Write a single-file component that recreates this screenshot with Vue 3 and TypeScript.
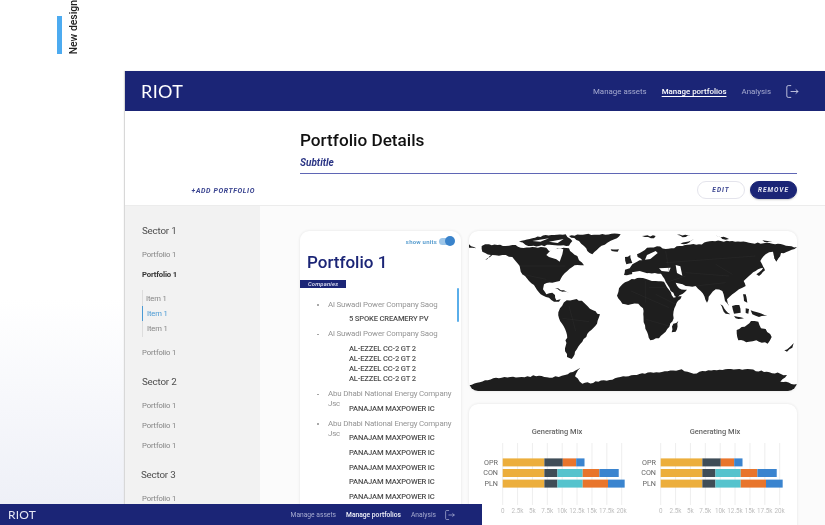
<script setup lang="ts">
interface Company { name: string; wrap?: boolean; tight?: boolean; plants: string[] }
const companies: Company[] = [
  { name: 'Al Suwadi Power Company Saog', plants: ['5 SPOKE CREAMERY PV'] },
  { name: 'Al Suwadi Power Company Saog', tight: true, plants: ['AL-EZZEL CC-2 GT 2', 'AL-EZZEL CC-2 GT 2', 'AL-EZZEL CC-2 GT 2', 'AL-EZZEL CC-2 GT 2'] },
  { name: 'Abu Dhabi National Energy Company Jsc', wrap: true, plants: ['PANAJAM MAXPOWER IC'] },
  { name: 'Abu Dhabi National Energy Company Jsc', wrap: true, plants: ['PANAJAM MAXPOWER IC', 'PANAJAM MAXPOWER IC', 'PANAJAM MAXPOWER IC', 'PANAJAM MAXPOWER IC', 'PANAJAM MAXPOWER IC'] },
]
const ticks = ['0', '2.5k', '5k', '7.5k', '10k', '12.5k', '15k', '17.5k', '20k']
const colors = ['#ecae3c', '#3f4d57', '#e8752c', '#3a84cf']
const colorsLong = ['#ecae3c', '#3f4d57', '#55c3cd', '#e8752c', '#3a84cf']
const rows = [
  { label: 'OPR', y: 54.4, colors, values: [7, 3.1, 2.25, 1.4] },
  { label: 'CON', y: 65, colors: colorsLong, values: [7, 2.2, 4.25, 2.8, 3.25] },
  { label: 'PLN', y: 75.6, colors: colorsLong, values: [7, 2.2, 4.25, 4.25, 2.8] },
]
const X0 = 33.7
const SCALE = 5.95
function segments(values: number[], palette: string[]) {
  let acc = 0
  return values.map((v, i) => {
    const seg = { x: X0 + acc * SCALE, w: v * SCALE, fill: palette[i] }
    acc += v
    return seg
  })
}
let seed = 7
function rand() {
  seed = (seed * 16807) % 2147483647
  return seed / 2147483647 - 0.5
}
// Roughens a polygon's edges so the coastlines read as a map rather than as straight cuts.
function jag(d: string, amp = 5): string {
  const nums = (d.match(/-?[\d.]+/g) ?? []).map(Number)
  const pts: [number, number][] = []
  for (let i = 0; i + 1 < nums.length; i += 2) pts.push([nums[i], nums[i + 1]])
  const out: string[] = []
  pts.forEach((p, i) => {
    const q = pts[(i + 1) % pts.length]
    const dx = q[0] - p[0]
    const dy = q[1] - p[1]
    const len = Math.hypot(dx, dy)
    const n = Math.floor(len / 8)
    out.push(`${p[0]} ${p[1]}`)
    for (let k = 1; k < n; k++) {
      const off = rand() * amp
      const x = p[0] + (dx * k) / n - (dy / len) * off
      const y = p[1] + (dy * k) / n + (dx / len) * off
      out.push(`${x.toFixed(1)} ${y.toFixed(1)}`)
    }
  })
  return `M${out.join('L')}Z`
}
const rawLand = [
  // North America
  'M38 45L60 40 85 42 110 45 140 42 155 50 190 48 232 50 240 60 283 50 300 52 310 65 325 75 330 88 345 103 325 102 310 108 295 120 280 135 272 150 262 152 250 155 225 160 222 175 232 190 250 185 258 192 262 208 275 205 270 212 255 212 240 200 215 190 200 170 180 150 160 130 152 105 130 78 100 72 70 72 48 88 66 72 40 62Z',
  // Arctic archipelago
  'M150 32L190 22 230 12 290 10 310 30 300 44 250 42 210 45 170 42Z',
  // Greenland
  'M300 15L350 10 400 9 455 10 436 25 415 35 390 50 370 70 355 60 345 45 330 30Z',
  // South America
  'M273 232L293 208 323 204 345 215 356 226 372 238 393 250 384 278 360 302 340 332 318 362 308 384 294 378 288 352 294 312 270 262 268 244Z',
  // Africa
  'M468 154L488 144 513 140 538 146 560 150 585 152 600 176 614 200 638 196 616 232 614 262 590 302 570 322 544 328 534 302 524 274 522 232 508 218 486 220 460 218 444 194 450 172Z',
  // Eurasia
  'M465 132L468 116 482 112 490 100 504 92 520 88 506 78 504 70 534 50 564 46 590 54 640 45 690 40 730 30 790 30 840 35 910 38 984 48 960 60 936 66 922 92 912 62 890 70 874 90 884 110 860 120 840 135 824 150 830 165 810 175 790 190 774 205 780 225 768 210 760 180 740 175 725 190 714 215 695 180 680 165 650 165 620 155 630 172 654 176 625 200 605 180 590 152 576 128 530 128 500 128Z',
  // Australia
  'M803 297L834 282 846 270 868 272 876 292 890 294 908 318 896 338 862 328 840 332 808 328Z',
  // Madagascar
  'M613 278L628 270 620 302 608 304Z',
  // New Zealand
  'M946 358L960 350 974 336 970 350 954 362Z',
  // Antarctica
  'M-8 490L-8 464 48 448 98 440 158 438 210 434 250 440 288 432 334 410 318 436 340 458 388 452 438 442 528 428 638 415 674 428 718 418 828 415 934 428 954 432 934 452 992 462 992 490Z',
  // UK, Ireland, Iceland, Cuba, Chukotka
  'M468 78L484 72 490 96 472 100Z',
  'M425 55L450 55 446 62 428 60Z',
  'M258 172L285 178 300 185 280 182Z',
  'M0 40L22 52 0 50Z',
  // Indonesia and neighbours
  'M789 225L811 222 815 245 795 248Z',
  'M754 220L784 250 770 248Z',
  'M795 255L825 262 800 262Z',
  'M822 190L830 190 835 215 825 210Z',
  'M845 238L870 245 895 255 870 258 850 250Z',
  'M830 232L840 234 838 248 830 246Z',
  // Japan, Sakhalin
  'M862 130L884 108 888 118 870 135Z',
  'M915 80L930 70 922 90Z',
  // Arctic islands
  'M519 15L560 15 555 22Z',
  'M615 12L665 12 650 18Z',
  'M739 12L780 24 760 24Z',
  'M634 38L675 25 645 40Z',
  'M880 28L910 30 895 34Z',
]
const land = rawLand.map((d) => jag(d))
const holes = [
  'M232 72L245 58 270 52 283 55 280 70 272 92 262 85 240 78Z',
  'M489 124L512 120 532 126 552 136 572 138 580 146 560 146 530 142 505 138 490 132Z',
  'M570 112L605 110 600 122 578 120Z',
  'M620 102L634 106 640 134 624 126Z',
  'M534 72L560 60 566 66 544 84 528 86Z',
  'M190 30L240 22 214 32ZM240 32L284 24 266 36Z',
]
const borders = 'M152 105L290 105M160 130L232 145M530 150L530 215M486 180L600 230M530 265L600 285M300 225L320 300M280 262L360 272M650 125L780 135M590 95L860 75M680 165L770 155M590 155L650 135M590 60L600 120M740 100L790 130M560 190L620 220M540 170L590 170'
</script>

<template>
  <div class="canvas">
    <div class="note">
      <span class="note-bar"></span>
      <span class="note-text">New design</span>
    </div>

    <section class="frame">
      <header class="topbar">
        <span class="logo">RIOT</span>
        <nav class="nav">
          <a>Manage assets</a>
          <a class="active">Manage portfolios</a>
          <a>Analysis</a>
          <svg class="logout" width="13" height="13" viewBox="0 0 13 13" fill="none" stroke="currentColor" stroke-width=".9" stroke-linecap="round" stroke-linejoin="round">
            <path d="M4.8.6H2.2A1.4 1.4 0 0 0 .8 2v9a1.4 1.4 0 0 0 1.4 1.4h2.6" />
            <path d="M5 6.5h7M10 4.7l2 1.8-2 1.8" />
          </svg>
        </nav>
      </header>

      <div class="subhead">
        <div class="add-col"><span class="add">+ADD PORTFOLIO</span></div>
        <div class="title-col">
          <h1>Portfolio Details</h1>
          <p class="subtitle">Subtitle</p>
          <div class="actions">
            <button class="btn">EDIT</button>
            <button class="btn primary">REMOVE</button>
          </div>
        </div>
      </div>

      <div class="body">
        <aside class="side">
          <h3>Sector 1</h3>
          <a class="pf">Portfolio 1</a>
          <a class="pf bold">Portfolio 1</a>
          <ul class="items">
            <li>Item 1</li>
            <li class="on">Item 1</li>
            <li>Item 1</li>
          </ul>
          <a class="pf after-items">Portfolio 1</a>
          <h3 class="gap">Sector 2</h3>
          <a class="pf">Portfolio 1</a>
          <a class="pf">Portfolio 1</a>
          <a class="pf">Portfolio 1</a>
          <h3 class="gap third">Sector 3</h3>
          <a class="pf">Portfolio 1</a>
        </aside>

        <main class="main">
          <div class="card list-card">
            <div class="units">
              <span>show units</span>
              <span class="toggle"><i></i></span>
            </div>
            <h2>Portfolio 1</h2>
            <span class="tag">Companies</span>
            <span class="scroll"></span>
            <div class="companies">
              <div v-for="(c, i) in companies" :key="i" class="company">
                <div class="cname">{{ c.name }}</div>
                <div class="plants" :class="{ tight: c.tight, under: c.wrap }">
                  <div v-for="(p, j) in c.plants" :key="j">{{ p }}</div>
                </div>
              </div>
            </div>
          </div>

          <div class="right">
            <div class="card map-card">
              <svg width="328" height="160" viewBox="0 0 984 480" preserveAspectRatio="none">
                <path v-for="(d, i) in land" :key="i" :d="d" fill="#1e1e1e" />
                <path v-for="(d, i) in holes" :key="'h' + i" :d="d" fill="#fff" />
                <path :d="borders" fill="none" stroke="#343434" stroke-width="1" />
              </svg>
            </div>
            <div class="card chart-card">
              <svg v-for="n in 2" :key="n" width="158.3" height="118" viewBox="0 0 158.3 118">
                <text x="88" y="30" class="ctitle" text-anchor="middle">Generating Mix</text>
                <line v-for="(t, i) in ticks" :key="t" :x1="X0 + i * 14.875" :x2="X0 + i * 14.875" y1="39" y2="101" stroke="#eeeeee" />
                <text v-for="(t, i) in ticks" :key="'t' + t" :x="X0 + i * 14.875" y="109" class="tick" text-anchor="middle">{{ t }}</text>
                <g v-for="r in rows" :key="r.label">
                  <text x="29" :y="r.y + 6.5" class="rlabel" text-anchor="end">{{ r.label }}</text>
                  <rect v-for="(s, i) in segments(r.values, r.colors)" :key="i" :x="s.x" :y="r.y" :width="s.w" height="8" :fill="s.fill" />
                </g>
              </svg>
            </div>
          </div>
        </main>
      </div>
    </section>

    <footer class="minibar">
      <span class="mini-logo">RIOT</span>
      <nav class="mini-nav">
        <a>Manage assets</a>
        <a class="active">Manage portfolios</a>
        <a>Analysis</a>
        <svg class="mini-exit" width="10" height="10" viewBox="0 0 13 13" fill="none" stroke="currentColor" stroke-width="1" stroke-linecap="round" stroke-linejoin="round">
          <path d="M4.8.6H2.2A1.4 1.4 0 0 0 .8 2v9a1.4 1.4 0 0 0 1.4 1.4h2.6" />
          <path d="M5 6.5h7M10 4.7l2 1.8-2 1.8" />
        </svg>
      </nav>
    </footer>
  </div>
</template>

<style scoped>
.canvas {
  position: relative;
  width: 825px;
  height: 525px;
  overflow: hidden;
  background: linear-gradient(to bottom, #fff 57%, #eef0f7 96%);
  font-family: Roboto, "Liberation Sans", sans-serif;
  filter: blur(0.3px);
}
.note { position: absolute; left: 57px; top: 0; height: 54px; display: flex; gap: 6px; align-items: flex-end; }
.note-bar { width: 5px; height: 38px; background: #4dabf0; }
.note-text {
  writing-mode: vertical-rl;
  transform: rotate(180deg);
  font-size: 10.4px;
  line-height: 11px;
  font-weight: 500;
  color: #222;
  white-space: nowrap;
}
.frame {
  position: absolute;
  left: 125px;
  top: 71px;
  width: 700px;
  height: 454px;
  background: #fff;
  box-shadow: -1px 0 1px #d8d8d8;
  display: flex;
  flex-direction: column;
}
.topbar {
  height: 40px;
  flex: none;
  background: #1b2576;
  display: flex;
  align-items: center;
  justify-content: space-between;
  padding: 0 26px 0 16px;
  color: #fff;
}
.logo { font-family: Lato, sans-serif; font-size: 18px; letter-spacing: .4px; line-height: 40px; }
.nav { display: flex; align-items: center; gap: 15px; font-size: 7.9px; color: #a6abd0; }
.nav .active { color: #fff; font-weight: 500; text-decoration: underline; text-underline-offset: 2px; }
.logout { color: #c9cce4; }
.subhead { height: 94px; flex: none; display: flex; border-bottom: 1px solid #ececec; box-sizing: content-box; }
.add-col { width: 175px; flex: none; display: flex; justify-content: flex-end; align-items: flex-end; padding: 0 45px 9px 0; box-sizing: border-box; }
.add { font-size: 7px; line-height: 9px; font-style: italic; font-weight: 700; letter-spacing: .6px; color: #3a4490; white-space: nowrap; }
.title-col { width: 497px; }
h1 { margin: 19px 0 0; font-size: 17.2px; line-height: 21px; font-weight: 500; color: #111; }
.subtitle {
  margin: 5px 0 0;
  padding-bottom: 4px;
  font-size: 10px;
  line-height: 13px;
  font-style: italic;
  font-weight: 700;
  color: #2b3585;
  border-bottom: 1px solid #5f66b5;
}
.actions { display: flex; justify-content: flex-end; gap: 5px; margin-top: 7px; }
.btn {
  height: 18px;
  width: 48px;
  padding: 0;
  border: 1px solid #e4e4ec;
  border-radius: 9px;
  background: #fff;
  font-family: inherit;
  font-size: 6.5px;
  font-style: italic;
  font-weight: 700;
  letter-spacing: 1px;
  color: #3a4490;
}
.btn.primary { width: 47px; background: #1b2576; border-color: #1b2576; color: #e8e9f5; box-shadow: 0 1px 2px #0003; }
.body { flex: 1; min-height: 0; display: flex; overflow: hidden; }
.side { width: 135px; flex: none; background: #f2f2f2; padding: 18.5px 0 0 17px; box-sizing: border-box; }
.side h3 { margin: 0 0 13px; font-size: 9.8px; line-height: 12px; letter-spacing: -.2px; font-weight: 400; color: #4f4f4f; }
.side h3.gap { margin-top: 18px; }
.side h3.third { margin-left: -1px; }
.pf { display: block; font-size: 7.7px; line-height: 10px; letter-spacing: -.15px; color: #858585; margin-bottom: 10px; }
.pf.bold { font-weight: 700; color: #333; }
.items { list-style: none; margin: 0; padding: 1.5px 0 1px; width: 40px; border-left: 1px solid #ddd; }
.items li { font-size: 7.6px; line-height: 15px; letter-spacing: -.1px; color: #858585; padding-left: 4px; }
.items li:first-child { padding-left: 3px; }
.items li.on { color: #4a9ad4; box-shadow: -1px 0 0 #4a9ad4; }
.pf.after-items { margin-top: 10.5px; }
.main { flex: 1; min-width: 0; display: flex; gap: 8px; padding: 25px 0 0 40px; background: #fbfbfb; }
.card { background: #fff; border-radius: 9px; box-shadow: 0 0 3px #0000001a; }
.list-card { position: relative; width: 161px; height: 320px; flex: none; overflow: hidden; }
.units { display: flex; align-items: center; justify-content: flex-end; gap: 2px; padding: 5px 8px 0 0; height: 10px; font-size: 6px; font-weight: 700; letter-spacing: .2px; color: #5b9fd0; }
.toggle { position: relative; width: 14px; height: 7px; border-radius: 3.5px; background: #9ec6e8; }
.toggle i { position: absolute; right: -2px; top: -1.5px; width: 10px; height: 10px; border-radius: 50%; background: #3a83cb; }
h2 { margin: 4px 0 0 7px; font-size: 17px; line-height: 24px; font-weight: 500; color: #1b2576; }
.tag {
  display: block;
  width: 46px;
  height: 8px;
  margin-top: 6px;
  padding-left: 8px;
  box-sizing: border-box;
  background: #1b2576;
  color: #dfe1f3;
  font-size: 5.8px;
  line-height: 8px;
  font-style: italic;
  font-weight: 500;
  letter-spacing: .2px;
}
.scroll { position: absolute; right: 2px; top: 57px; width: 2px; height: 34px; background: #5aaeea; border-radius: 1px; }
.companies { padding-top: 11.5px; }
.company { margin-bottom: 2.4px; }
.cname { position: relative; margin-left: 28px; width: 126px; font-size: 7.9px; line-height: 10px; letter-spacing: -.16px; color: #949494; }
.cname::before { content: ""; position: absolute; left: -11px; top: 4.5px; width: 1.5px; height: 1.5px; border-radius: 50%; background: #999; }
.plants { margin: 2.6px 0 0 49px; font-size: 7.6px; line-height: 14.7px; font-weight: 500; color: #4f4f4f; letter-spacing: -.17px; white-space: nowrap; }
.plants.tight { margin-top: 5px; line-height: 10px; margin-bottom: 5px; }
.plants.under { margin-top: -7.5px; }
.right { width: 328px; flex: none; display: flex; flex-direction: column; gap: 13px; }
.map-card { height: 160px; flex: none; overflow: hidden; }
.map-card svg { display: block; }
.chart-card { height: 140px; flex: none; display: flex; align-items: flex-start; }
.ctitle { font-size: 7.5px; font-weight: 500; fill: #666; }
.tick { font-size: 6.3px; fill: #bcbcbc; }
.rlabel { font-size: 7.2px; fill: #666; }
.minibar {
  position: absolute;
  left: 0;
  bottom: 0;
  width: 482px;
  height: 21px;
  background: #1b2576;
  color: #fff;
  display: flex;
  align-items: center;
  justify-content: space-between;
  padding: 0 27px 0 8px;
  box-sizing: border-box;
}
.mini-logo { font-family: Lato, sans-serif; font-size: 12px; letter-spacing: .2px; color: #e6e7f3; }
.mini-nav { display: flex; align-items: center; gap: 10px; font-size: 6.7px; color: #a6abd0; }
.mini-nav .active { color: #f2f3fa; font-weight: 500; }
.mini-exit { margin-left: -1px; }
</style>
